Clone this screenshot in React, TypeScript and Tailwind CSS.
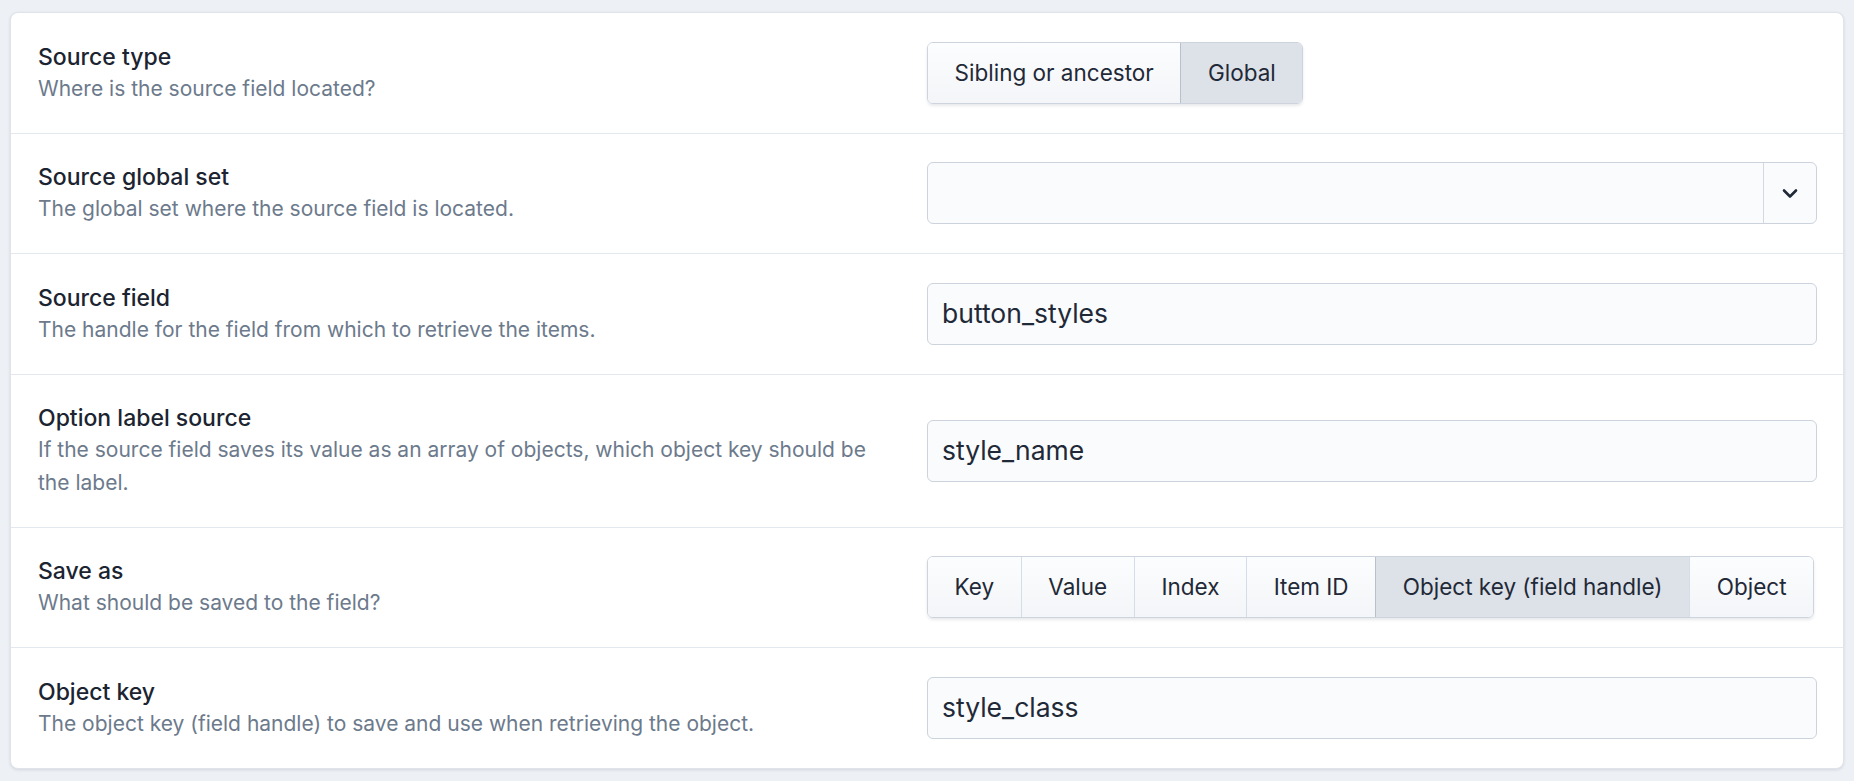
import React from "react";

type Row = {
  title: string;
  desc: string;
  control: React.ReactNode;
};

const FONT = { fontFamily: "Inter, 'Noto Sans', sans-serif" };

function Segmented({ options, active }: { options: string[]; active: string }) {
  return (
    <div className="inline-flex h-[62px] shrink-0 overflow-hidden rounded-[6px] border border-[#cdd4de] shadow-[0_2px_3px_rgba(30,40,60,0.10)]">
      {options.map((o, i) => {
        const on = o === active;
        return (
          <div
            key={o}
            className={
              "flex items-center whitespace-nowrap px-[26.6px] text-[22.5px] text-[#1f2937] " +
              (i > 0 ? "border-l " : "") +
              (on
                ? "border-[#b8c0cb] bg-[#dde1e8]"
                : "border-[#d6dde6] bg-gradient-to-b from-[#fcfdfe] to-[#f3f5f8]")
            }
          >
            {o}
          </div>
        );
      })}
    </div>
  );
}

function TextInput({ value }: { value: string }) {
  return (
    <div className="flex h-[62px] w-full items-center rounded-[6px] border border-[#ccd3dc] bg-[#fafbfd] px-[14px] text-[26.5px] text-[#1f2937]">
      {value}
    </div>
  );
}

function Select() {
  return (
    <div className="flex h-[62px] w-full overflow-hidden rounded-[6px] border border-[#ccd3dc] bg-[#fafbfd]">
      <div className="flex-1" />
      <div className="flex w-[53px] items-center justify-center border-l border-[#d3d9e1]">
        <svg width="16" height="11" viewBox="0 0 16 11" fill="none">
          <path d="M2 2.5l6 6 6-6" stroke="#1f2937" strokeWidth="2.6" strokeLinecap="round" strokeLinejoin="round" />
        </svg>
      </div>
    </div>
  );
}

const rows: Row[] = [
  {
    title: "Source type",
    desc: "Where is the source field located?",
    control: <Segmented options={["Sibling or ancestor", "Global"]} active="Global" />,
  },
  {
    title: "Source global set",
    desc: "The global set where the source field is located.",
    control: <Select />,
  },
  {
    title: "Source field",
    desc: "The handle for the field from which to retrieve the items.",
    control: <TextInput value="button_styles" />,
  },
  {
    title: "Option label source",
    desc: "If the source field saves its value as an array of objects, which object key should be the label.",
    control: <TextInput value="style_name" />,
  },
  {
    title: "Save as",
    desc: "What should be saved to the field?",
    control: (
      <Segmented
        options={["Key", "Value", "Index", "Item ID", "Object key (field handle)", "Object"]}
        active="Object key (field handle)"
      />
    ),
  },
  {
    title: "Object key",
    desc: "The object key (field handle) to save and use when retrieving the object.",
    control: <TextInput value="style_class" />,
  },
];

export default function App() {
  return (
    <div className="min-h-[781px] bg-[#edf0f5] px-[10px] pt-[12px] pb-[13px]" style={FONT}>
      <div className="overflow-hidden rounded-[8px] border border-[#dfe4ea] bg-white shadow-[0_1px_3px_rgba(30,40,60,0.12)]">
        {rows.map((r, i) => (
          <div
            key={r.title}
            className={
              "grid grid-cols-2 " + (i < rows.length - 1 ? "border-b border-[#e3e8ee]" : "")
            }
          >
            <div className="py-[27.5px] pl-[27px] pr-[40px]">
              <div className="text-[23px] font-[450] leading-[32px] text-[#1b2430]">{r.title}</div>
              <div className="text-[21px] leading-[32.5px] text-[#6c7a8c]">{r.desc}</div>
            </div>
            <div className="flex items-center pr-[26px]">{r.control}</div>
          </div>
        ))}
      </div>
    </div>
  );
}
